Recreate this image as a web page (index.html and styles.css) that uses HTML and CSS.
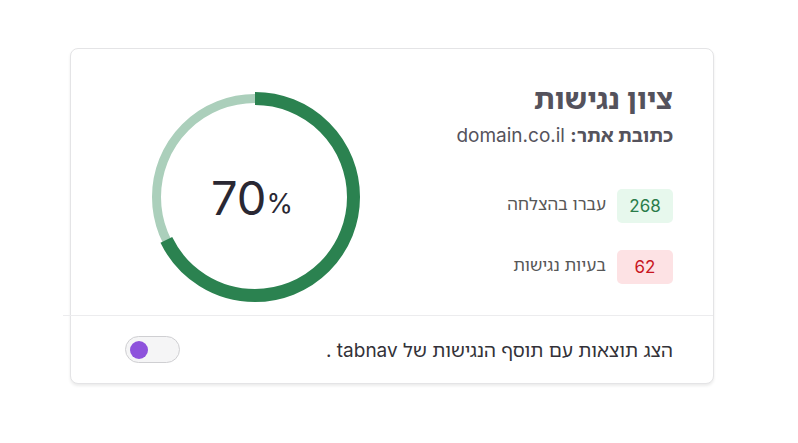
FILE: index.html
```html
<!DOCTYPE html>
<html lang="he" dir="rtl">
<head>
<meta charset="utf-8">
<link rel="stylesheet" href="styles.css">
</head>
<body>
<div class="card">
  <div class="top">
    <div class="info">
      <h1 class="title">ציון נגישות</h1>
      <div class="site"><b>כתובת אתר:</b> domain.co.il</div>
      <div class="stats">
        <div class="stat"><span class="badge ok">268</span><span class="label">עברו בהצלחה</span></div>
        <div class="stat"><span class="badge bad">62</span><span class="label">בעיות נגישות</span></div>
      </div>
    </div>
    <div class="gauge">
      <svg class="ring" width="212" height="212" viewBox="0 0 212 212">
        <circle cx="106" cy="106" r="98.5" fill="none" stroke="#abcfbb" stroke-width="9"/>
        <circle cx="106" cy="106" r="98.5" fill="none" stroke="#2b8250" stroke-width="13" stroke-dasharray="419 700" transform="rotate(-90 106 106)"/>
      </svg>
      <div class="score" dir="ltr"><span class="num">70</span><span class="pct">%</span></div>
    </div>
  </div>
  <div class="footer">
    <span class="note">הצג תוצאות עם תוסף הנגישות של tabnav .</span>
    <span class="toggle"><span class="knob"></span></span>
  </div>
</div>
</body>
</html>
```
FILE: styles.css
```css
* { box-sizing: border-box; }
html, body { margin: 0; padding: 0; background: #fff; }
body {
  font-family: Inter, "Noto Sans Hebrew", "Liberation Sans", "DejaVu Sans", sans-serif;
  width: 798px;
  height: 443px;
  padding: 48px 84px 0 70px;
}
.card {
  width: 644px;
  height: 336px;
  border: 1px solid #e4e4e6;
  border-radius: 8px;
  box-shadow: 0 2px 3px rgba(0,0,0,0.08);
  background: #fff;
  display: flex;
  flex-direction: column;
}
.top {
  height: 266px;
  display: flex;
  justify-content: space-between;
  align-items: flex-start;
  padding: 0 40px 0 78px;
}
.info {
  display: flex;
  flex-direction: column;
  align-items: flex-start;
  padding-top: 32px;
}
.title {
  margin: 0;
  font-size: 29px;
  line-height: 36px;
  font-weight: 700;
  color: #54525c;
}
.site {
  margin-top: 6px;
  font-size: 19px;
  line-height: 26px;
  color: #55535c;
}
.site b { font-weight: 700; }
.stats {
  margin-top: 40px;
  display: flex;
  flex-direction: column;
  gap: 27px;
}
.stat {
  display: flex;
  align-items: center;
  gap: 11px;
}
.badge {
  width: 56px;
  height: 34px;
  border-radius: 5px;
  display: flex;
  align-items: center;
  justify-content: center;
  font-size: 17px;
}
.badge.ok { background: #e7f8ed; color: #2a7d4a; }
.badge.bad { background: #fde2e4; color: #c8161f; }
.label {
  font-size: 17px;
  color: #575757;
  margin-top: -6px;
}
.gauge {
  position: relative;
  width: 212px;
  height: 212px;
  margin-top: 42px;
}
.ring { display: block; }
.score {
  position: absolute;
  inset: 0;
  display: flex;
  align-items: center;
  justify-content: center;
  color: #2a2833;
  padding-right: 6px;
}
.num { font-size: 47px; font-weight: 400; }
.pct { font-size: 27px; margin-top: 12px; }
.footer {
  flex: 1;
  border-top: 1px solid #ececee;
  margin-left: -8px;
  display: flex;
  align-items: center;
  justify-content: space-between;
  padding: 0 40px 0 62px;
}
.note {
  font-size: 19px;
  color: #333238;
}
.toggle {
  width: 55px;
  height: 27px;
  border: 1px solid #cfcfd2;
  border-radius: 14px;
  background: #f5f5f6;
  display: flex;
  align-items: center;
  justify-content: flex-end;
  padding: 0 4px;
}
.knob {
  width: 18px;
  height: 18px;
  border-radius: 50%;
  background: #8e52dc;
}
```
